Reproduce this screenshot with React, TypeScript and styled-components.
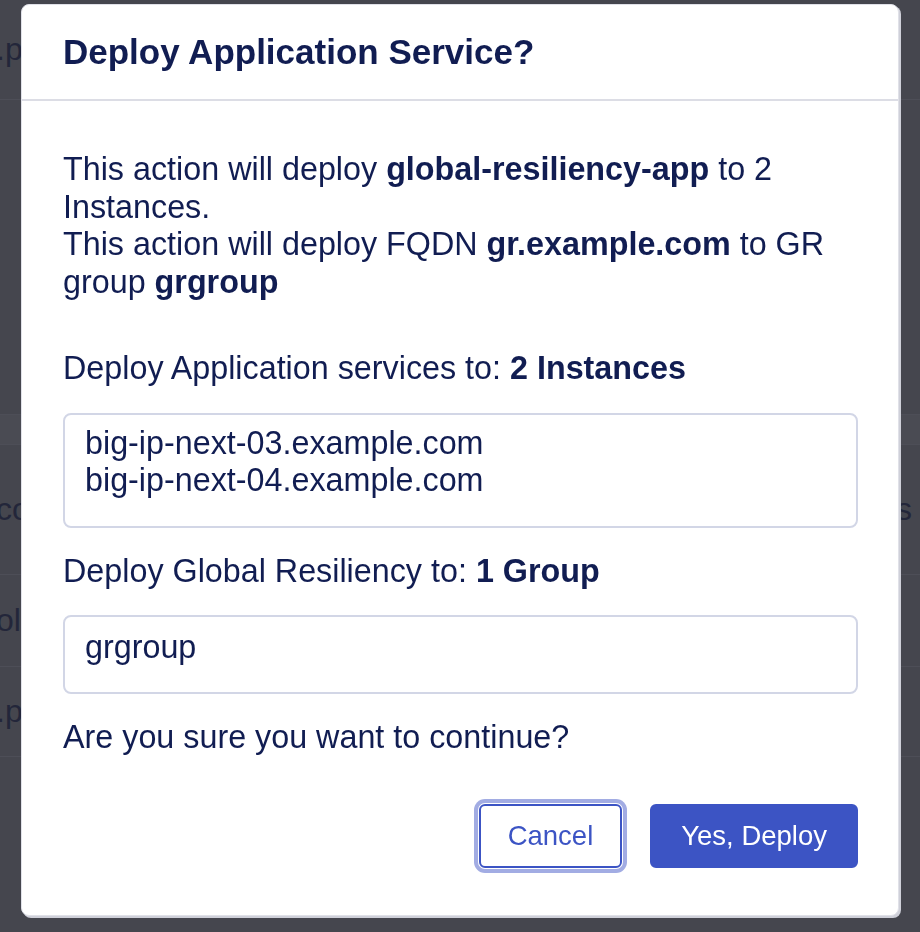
import styled, { createGlobalStyle } from "styled-components";

const GlobalStyle = createGlobalStyle`
  html, body {
    margin: 0;
    height: 100%;
  }
  body {
    background: #45464e;
    font-family: "Liberation Sans", Arial, sans-serif;
    overflow: hidden;
  }
  #root {
    height: 100%;
  }
`;

const Backdrop = styled.div`
  height: 100%;
  display: flex;
  flex-direction: column;
  color: #23263a;
  font-size: 32px;
`;

const BackRow = styled.div<{ $h: number; $tone?: boolean }>`
  height: ${(p) => p.$h}px;
  display: flex;
  align-items: center;
  justify-content: space-between;
  border-bottom: 1px solid #4d4e57;
  background: ${(p) => (p.$tone ? "#4a4b53" : "transparent")};
  padding: 0 8px 0 0;
  box-sizing: border-box;
`;

const BackText = styled.span`
  margin-left: -4px;
`;

const Overlay = styled.div`
  position: fixed;
  inset: 0;
  padding: 4px 0 0 21px;
`;

const Modal = styled.div`
  width: 878px;
  box-sizing: border-box;
  background: #fff;
  border: 1px solid #e0e1e8;
  border-radius: 8px;
  box-shadow: 2px 2px 0 #cfd0d9;
  color: #111d52;
`;

const Header = styled.div`
  height: 94px;
  display: flex;
  align-items: center;
  padding: 0 40px 0 41px;
  border-bottom: 2px solid #dcdde5;
`;

const Title = styled.h2`
  margin: 0;
  font-size: 35px;
  font-weight: 700;
  line-height: 40px;
`;

const Body = styled.div`
  display: flex;
  flex-direction: column;
  padding: 50px 40px 47px 41px;
  font-size: 32.3px;
  line-height: 37.5px;
`;

const Intro = styled.p`
  margin: 0 0 49px;
`;

const Line = styled.span`
  display: block;
`;

const FieldLabel = styled.div`
  margin-bottom: 25px;
`;

const TargetBox = styled.div<{ $h: number }>`
  height: ${(p) => p.$h}px;
  box-sizing: border-box;
  border: 2px solid #d2d6e6;
  border-radius: 8px;
  padding: ${(p) => (p.$h > 100 ? "10px" : "12px")} 20px 0;
  margin-bottom: 25px;
`;

const Question = styled.p`
  margin: 0 0 47px;
`;

const Actions = styled.div`
  display: flex;
  justify-content: flex-end;
  align-items: center;
  gap: 28px;
`;

const Button = styled.button<{ $primary?: boolean }>`
  height: 64px;
  box-sizing: border-box;
  padding: 0 ${(p) => (p.$primary ? "29px" : "27px")};
  font-family: "Liberation Sans", Arial, sans-serif;
  font-size: 27.5px;
  border-radius: 6px;
  cursor: pointer;
  border: 2px solid #3c54c4;
  background: ${(p) => (p.$primary ? "#3c54c4" : "#fff")};
  color: ${(p) => (p.$primary ? "#fff" : "#3c54c4")};
  box-shadow: ${(p) =>
    p.$primary ? "none" : "0 0 0 1px #fff, 0 0 0 5px #a2ace3"};
`;

export default function App() {
  return (
    <>
      <GlobalStyle />
      <Backdrop>
        <BackRow $h={100}>
          <BackText>.p</BackText>
        </BackRow>
        <BackRow $h={315} />
        <BackRow $h={30} $tone />
        <BackRow $h={130}>
          <BackText>co</BackText>
          <span>s</span>
        </BackRow>
        <BackRow $h={92}>
          <BackText>ol</BackText>
        </BackRow>
        <BackRow $h={90}>
          <BackText>.p</BackText>
        </BackRow>
      </Backdrop>
      <Overlay>
        <Modal role="dialog" aria-modal="true">
          <Header>
            <Title>Deploy Application Service?</Title>
          </Header>
          <Body>
            <Intro>
              <Line>
                This action will deploy <b>global-resiliency-app</b> to 2
                Instances.
              </Line>
              <Line>
                This action will deploy FQDN <b>gr.example.com</b> to GR group{" "}
                <b>grgroup</b>
              </Line>
            </Intro>
            <FieldLabel>
              Deploy Application services to: <b>2 Instances</b>
            </FieldLabel>
            <TargetBox $h={115}>
              <Line>big-ip-next-03.example.com</Line>
              <Line>big-ip-next-04.example.com</Line>
            </TargetBox>
            <FieldLabel>
              Deploy Global Resiliency to: <b>1 Group</b>
            </FieldLabel>
            <TargetBox $h={79}>
              <Line>grgroup</Line>
            </TargetBox>
            <Question>Are you sure you want to continue?</Question>
            <Actions>
              <Button>Cancel</Button>
              <Button $primary>Yes, Deploy</Button>
            </Actions>
          </Body>
        </Modal>
      </Overlay>
    </>
  );
}
